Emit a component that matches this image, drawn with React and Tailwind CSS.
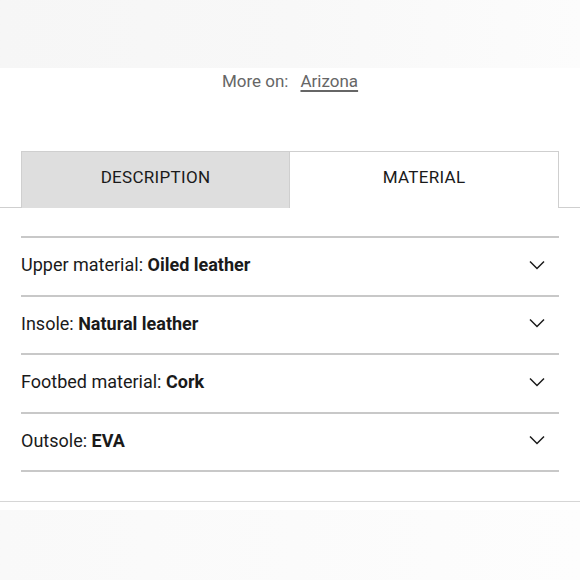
const rows = [
    { label: 'Upper material:', value: 'Oiled leather' },
    { label: 'Insole:', value: 'Natural leather' },
    { label: 'Footbed material:', value: 'Cork' },
    { label: 'Outsole:', value: 'EVA' },
]

const Chevron = () => (
    <svg width="16" height="10" viewBox="0 0 16 10" fill="none" className="mr-[14px]">
        <polyline points="1,1.5 8,8.5 15,1.5" stroke="#1a1a1a" strokeWidth="1.5" />
    </svg>
)

const App = () => {
    return (
        <div className="w-[580px] h-[580px] bg-white overflow-hidden text-[#1a1a1a]" style={{ fontFamily: 'Roboto, "Liberation Sans", sans-serif' }}>
            {/* Top fade */}
            <div className="h-[68px] bg-gradient-to-r from-[#f6f6f6] via-[#f8f8f8] to-[#fcfcfc]" />

            {/* More on */}
            <div className="h-[28px] flex items-center justify-center text-[17px] text-[#666]">
                <span>More on:</span>
                <span className="ml-3 underline underline-offset-[3px] decoration-[1.5px]">Arizona</span>
            </div>

            {/* Tabs */}
            <div className="mt-[55px] flex px-[21px] border-b border-[#cfcfcf]">
                <button className="-mb-px w-[269px] h-[57px] pb-[4px] bg-[#dedede] border border-[#cfcfcf] border-b-0 text-[17px] text-[#1a1a1a] tracking-[0.3px]">
                    DESCRIPTION
                </button>
                <button className="-mb-px flex-1 h-[57px] pb-[4px] bg-white border border-l-0 border-b-0 border-[#cfcfcf] text-[17px] text-[#1a1a1a] tracking-[0.3px]">
                    MATERIAL
                </button>
            </div>

            {/* Material list */}
            <div className="border-b border-[#d6d6d6]">
                <div className="mx-[21px] mt-[28px] mb-[29px] border-b-2 border-[#c8c8c8]">
                    {rows.map((row) => (
                        <div key={row.label} className="h-[58.5px] pb-[3px] border-t-2 border-[#c8c8c8] flex items-center justify-between">
                            <span className="text-[18px]">
                                {row.label} <span className="font-bold">{row.value}</span>
                            </span>
                            <Chevron />
                        </div>
                    ))}
                </div>
            </div>

            {/* Bottom fade */}
            <div className="mt-[8px] h-[80px] bg-gradient-to-r from-[#f9f9f9] via-[#fbfbfb] to-[#fdfdfd]" />
        </div>
    )
}

export default App
